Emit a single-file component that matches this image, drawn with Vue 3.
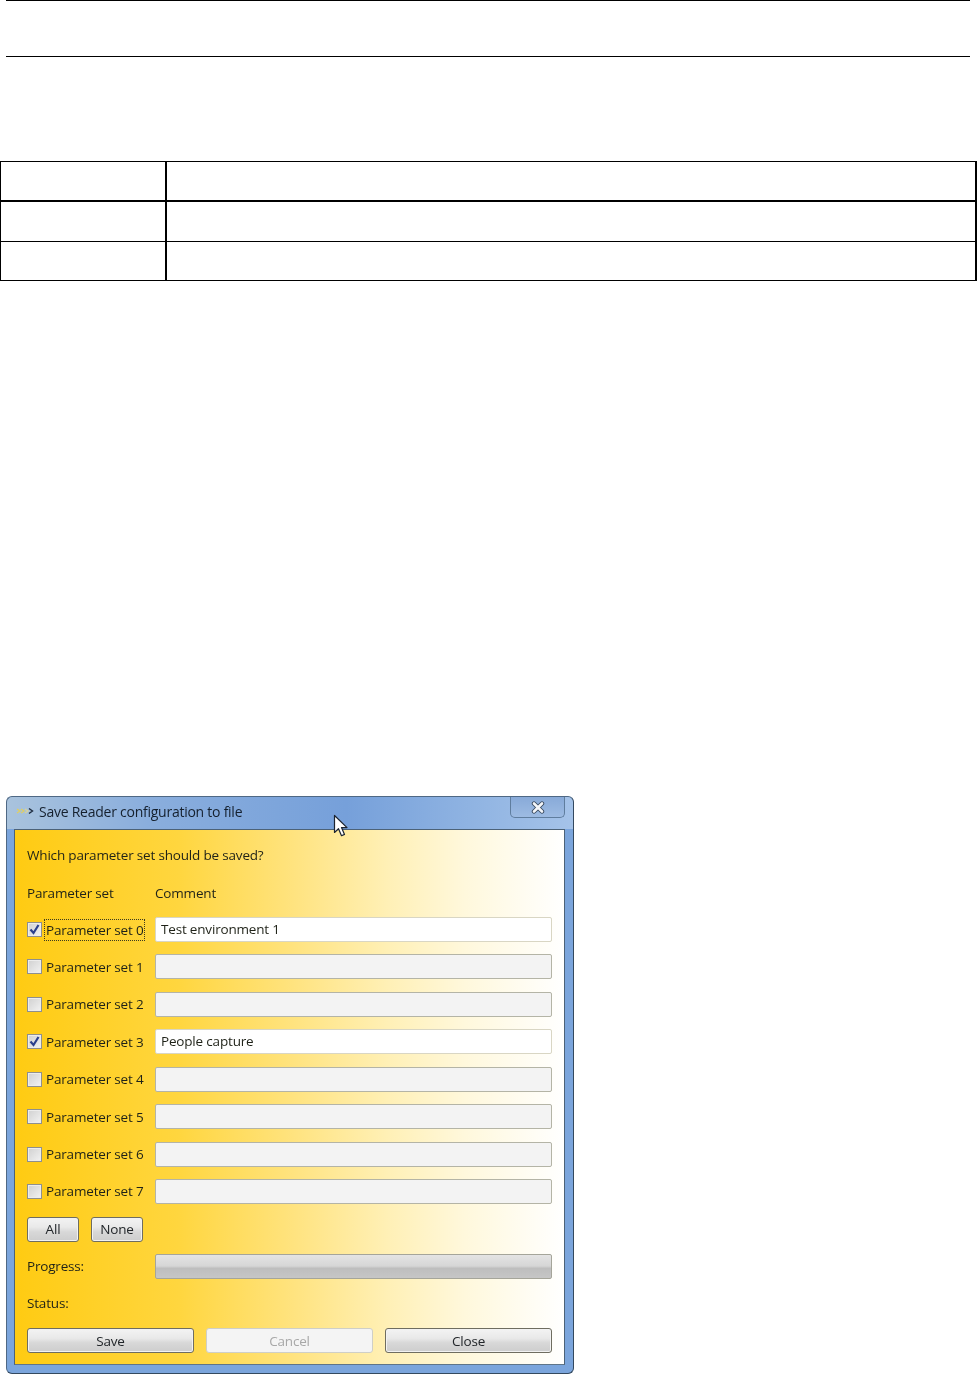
<script setup>
const rows = [
  { n: 0, checked: true, comment: 'Test environment 1', focus: true },
  { n: 1 }, { n: 2 },
  { n: 3, checked: true, comment: 'People capture' },
  { n: 4 }, { n: 5 }, { n: 6 }, { n: 7 },
]
</script>

<template>
  <div class="page">
    <div class="header-rule"></div>
    <table class="doc-table">
      <tbody>
        <tr class="heavy"><td class="c1"></td><td></td></tr>
        <tr><td class="c1"></td><td></td></tr>
        <tr><td class="c1"></td><td></td></tr>
      </tbody>
    </table>

    <div class="window">
      <div class="titlebar">
        <span class="app-icon">
          <svg width="20" height="10" viewBox="0 0 20 10">
            <path d="M1 3l3 2-3 2M5 3l3 2-3 2" fill="none" stroke="#e0cf62" stroke-width="1.3"/>
            <path d="M9 3l3 2-3 2" fill="none" stroke="#d9d29a" stroke-width="1.3"/>
            <path d="M13 2.5l3.5 2.5-3.5 2.5" fill="none" stroke="#1e2c40" stroke-width="1.4"/>
          </svg>
        </span>
        <span class="title">Save Reader configuration to file</span>
        <span class="close">
          <svg width="14" height="13" viewBox="0 0 14 13">
            <path d="M3 2.5l8 8M11 2.5l-8 8" stroke="#39485c" stroke-width="4.4" stroke-linecap="round"/>
            <path d="M3 2.5l8 8M11 2.5l-8 8" stroke="#f3f6fa" stroke-width="2.6" stroke-linecap="round"/>
          </svg>
        </span>
      </div>
      <div class="client">
        <p class="question">Which parameter set should be saved?</p>
        <div class="row head">
          <span class="lbl">Parameter set</span>
          <span class="lbl">Comment</span>
        </div>
        <div v-for="r in rows" :key="r.n" class="row">
          <div class="check-cell">
            <span class="box">
              <svg v-if="r.checked" width="13" height="13" viewBox="0 0 13 13">
                <path d="M2.5 6.5l3 3.5L10.5 2" fill="none" stroke="#2b3f8c" stroke-width="2.2"/>
              </svg>
            </span>
            <span class="lbl" :class="{ focus: r.focus }">Parameter set {{ r.n }}</span>
          </div>
          <div class="field" :class="{ on: r.checked }">{{ r.comment }}</div>
        </div>
        <div class="small-btns">
          <button class="btn small">All</button>
          <button class="btn small">None</button>
        </div>
        <div class="row progress-row">
          <span class="lbl">Progress:</span>
          <div class="progress"></div>
        </div>
        <div class="status lbl">Status:</div>
        <div class="actions">
          <button class="btn">Save</button>
          <button class="btn disabled">Cancel</button>
          <button class="btn">Close</button>
        </div>
      </div>
      <svg class="cursor" width="16" height="24" viewBox="0 0 16 24">
        <path d="M1.5 1.5v17l4-3.8 3 7 3-1.3-3-6.8h5.5z" fill="#fff" stroke="#1c2430" stroke-width="1.2" stroke-linejoin="round"/>
      </svg>
    </div>
  </div>
</template>

<style>
html, body { margin: 0; background: #fff; }
</style>

<style scoped>
.page {
  width: 977px;
  height: 1375px;
  overflow: hidden;
  background: #fff;
  font-family: "Open Sans", "Noto Sans", sans-serif;
}
.header-rule {
  height: 55px;
  margin: 0 7px 0 6px;
  border-top: 1px solid #000;
  border-bottom: 1px solid #000;
}
.doc-table {
  margin-top: 104px;
  width: 977px;
  height: 120px;
  border-collapse: collapse;
  table-layout: fixed;
  border-top: 1px solid #000;
  border-left: 1px solid #000;
  border-right: 2px solid #000;
  border-bottom: 1px solid #000;
}
.doc-table td {
  border: 1px solid #000;
  padding: 0;
  height: 38px;
}
.doc-table .heavy td { border-bottom-width: 2px; }
.doc-table .c1 { width: 164px; border-right-width: 2px; }

.window {
  position: relative;
  margin: 515px 0 0 6px;
  width: 568px;
  height: 578px;
  box-sizing: border-box;
  padding: 0 8px 8px 7px;
  border: 1px solid #4f6884;
  border-right-color: #34495f;
  border-bottom-color: #34495f;
  border-radius: 6px;
  background:
    linear-gradient(90deg, #a9c3dd 0%, #8aaedd 25%, #76a0da 60%, #93b6e3 85%, #a5c3e9 100%) top / 100% 32px no-repeat,
    #7ba5dc;
  display: flex;
  flex-direction: column;
  filter: blur(0.5px);
}
.titlebar {
  height: 32px;
  flex: none;
  box-sizing: border-box;
  padding-bottom: 4px;
  display: flex;
  align-items: center;
  position: relative;
  color: #15202e;
  font-size: 14px;
  letter-spacing: -0.25px;
}
.app-icon { width: 24px; margin-left: 1px; display: flex; }
.app-icon svg { margin-left: 1px; }
.close {
  position: absolute;
  right: 0;
  top: 0;
  width: 55px;
  height: 21px;
  box-sizing: border-box;
  border: 1px solid #5f7d9e;
  border-top: 0;
  border-radius: 0 0 5px 5px;
  background: linear-gradient(180deg, #88aad8, #9dbbe2);
  display: flex;
  align-items: center;
  justify-content: center;
}
.client {
  flex: 1;
  box-sizing: border-box;
  border: 1px solid #4c6278;
  border-bottom: 1px solid #5f7588;
  background: linear-gradient(90deg, #ffcb12 0%, #ffd63f 30%, #ffe483 52%, #fff0b6 68%, #fff8dc 82%, #ffffff 100%);
  padding: 0 12px;
  color: #1f2218;
  font-size: 13.5px;
  letter-spacing: -0.18px;
}
.question { margin: 15px 0 0; height: 20px; line-height: 20px; }
.row {
  display: grid;
  grid-template-columns: 128px 397px;
  align-items: center;
  height: 37.43px;
}
.head { margin-top: 15px; height: 26px; margin-bottom: 4.8px; }
.lbl { line-height: 20px; }
.check-cell { display: flex; align-items: center; }
.box {
  width: 15px;
  height: 15px;
  flex: none;
  box-sizing: border-box;
  border: 1px solid #8e8f8f;
  background: linear-gradient(135deg, #d0d0d0, #f2f2f2);
  box-shadow: inset 0 0 0 1px #ececec;
  display: flex;
  align-items: center;
  justify-content: center;
  margin-right: 2px;
}
.check-cell .lbl {
  padding: 0 0 0 1px;
  white-space: nowrap;
  border: 1px dotted transparent;
}
.check-cell .lbl.focus { border-color: #3d3a20; }
.field {
  box-sizing: border-box;
  height: 25px;
  border: 1px solid #b4b4a6;
  border-radius: 2px;
  background: #f3f3f3;
  padding-left: 5px;
  line-height: 23px;
  color: #1f2218;
}
.field.on { background: #fff; border-color: #d9d6c4; }
.small-btns { display: flex; gap: 12px; margin-top: 6.5px; height: 25px; }
.btn {
  flex: 1;
  height: 25px;
  box-sizing: border-box;
  padding: 0;
  border: 1px solid #6f6d60;
  border-radius: 3px;
  background: linear-gradient(180deg, #f3f3f3 0%, #e9e9e9 40%, #d8d8d8 60%, #cdcdcd 100%);
  box-shadow: inset 0 0 0 1px #f2f2f2;
  font: inherit;
  letter-spacing: inherit;
  color: #22262a;
}
.btn.small { flex: none; width: 52px; }
.btn.disabled {
  background: #f4f4f4;
  border-color: #cfcfc7;
  box-shadow: none;
  color: #a8a8a8;
}
.progress-row { margin-top: 6px; }
.progress {
  height: 25px;
  box-sizing: border-box;
  border: 1px solid #a5a59a;
  border-radius: 2px;
  background: linear-gradient(180deg, #e4e4e4 0%, #d6d6d6 48%, #bebebe 58%, #c6c6c6 100%);
}
.status { height: 37px; line-height: 37px; }
.actions {
  display: flex;
  gap: 12px;
  margin-top: 6px;
  width: 525px;
}
.cursor { position: absolute; left: 326px; top: 17px; }
</style>
